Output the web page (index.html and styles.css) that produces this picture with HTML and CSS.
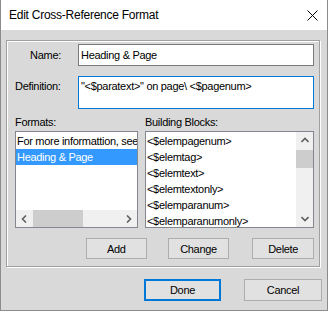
FILE: index.html
```html
<!DOCTYPE html>
<html lang="en">
<head>
    <meta charset="UTF-8">
    <title>Edit Cross-Reference Format</title>
    <link rel="stylesheet" href="styles.css">
</head>
<body>
    <div class="window">
        <div class="titlebar">
            <span class="title">Edit Cross-Reference Format</span>
            <svg class="close" width="11" height="11" viewBox="0 0 11 11">
                <path d="M0.5 0.5 L10.5 10.5 M10.5 0.5 L0.5 10.5" stroke="#000" stroke-width="1" fill="none"/>
            </svg>
        </div>

        <div class="group">
            <div class="field field-name">
                <label class="label">Name:</label>
                <div class="textbox">Heading &amp; Page</div>
            </div>

            <div class="field field-def">
                <label class="label">Definition:</label>
                <div class="textbox focused">"&lt;$paratext&gt;" on page\ &lt;$pagenum&gt;</div>
            </div>

            <div class="lists">
                <div class="list-col col-formats">
                    <div class="list-label">Formats:</div>
                    <div class="listbox">
                        <div class="items">
                            <div class="item">For more informattion, see</div>
                            <div class="item selected">Heading &amp; Page</div>
                        </div>
                        <div class="hscroll">
                            <span class="arrow"><svg width="7" height="8" viewBox="0 0 7 8"><path d="M5 0.5 L1.5 4 L5 7.5" stroke="#606060" stroke-width="1.6" fill="none"/></svg></span>
                            <span class="track"><span class="hthumb"></span></span>
                            <span class="arrow"><svg width="7" height="8" viewBox="0 0 7 8"><path d="M2 0.5 L5.5 4 L2 7.5" stroke="#606060" stroke-width="1.6" fill="none"/></svg></span>
                        </div>
                    </div>
                </div>

                <div class="list-col col-blocks">
                    <div class="list-label">Building Blocks:</div>
                    <div class="listbox listbox-v">
                        <div class="items">
                            <div class="item">&lt;$elempagenum&gt;</div>
                            <div class="item">&lt;$elemtag&gt;</div>
                            <div class="item">&lt;$elemtext&gt;</div>
                            <div class="item">&lt;$elemtextonly&gt;</div>
                            <div class="item">&lt;$elemparanum&gt;</div>
                            <div class="item">&lt;$elemparanumonly&gt;</div>
                        </div>
                        <div class="vscroll">
                            <span class="arrow"><svg width="8" height="7" viewBox="0 0 8 7"><path d="M0.5 5 L4 1.5 L7.5 5" stroke="#606060" stroke-width="1.6" fill="none"/></svg></span>
                            <span class="vtrack"><span class="vthumb"></span></span>
                            <span class="arrow"><svg width="8" height="7" viewBox="0 0 8 7"><path d="M0.5 2 L4 5.5 L7.5 2" stroke="#606060" stroke-width="1.6" fill="none"/></svg></span>
                        </div>
                    </div>
                </div>
            </div>

            <div class="edit-buttons">
                <button class="btn btn-add">Add</button>
                <button class="btn btn-change">Change</button>
                <button class="btn btn-delete">Delete</button>
            </div>
        </div>

        <div class="dialog-buttons">
            <button class="btn btn-done">Done</button>
            <button class="btn btn-cancel">Cancel</button>
        </div>
    </div>
</body>
</html>
```

FILE: styles.css
```css
* {
    margin: 0;
    padding: 0;
    box-sizing: border-box;
}

body {
    font-family: "Liberation Sans", Arial, sans-serif;
    font-size: 11px;
    line-height: 13px;
    letter-spacing: -0.3px;
    color: #000;
    background: #d9d9d9;
}

.window {
    width: 328px;
    height: 311px;
    background: #d9d9d9;
    border: 1px solid #8c8c8c;
    border-top: none;
    overflow: hidden;
}

.titlebar {
    height: 30px;
    background: #fff;
    display: flex;
    align-items: center;
    justify-content: space-between;
    padding: 0 9px 0 8px;
}

.title {
    font-size: 12px;
    letter-spacing: -0.25px;
}

.close {
    display: block;
}

/* group box */
.group {
    width: 314px;
    height: 227px;
    margin: 10px 0 0 5px;
    border: 1px solid #a0a0a0;
    box-shadow: inset 1px 1px 0 #fff, 1px 1px 0 #fff;
    padding: 3px 5px 0 8px;
}

.field {
    display: flex;
}

.field-name {
    align-items: center;
    height: 22px;
}

.field-def {
    margin-top: 10px;
    height: 33px;
}

.label {
    width: 63px;
    flex: none;
}

.field-name .label {
    text-align: right;
    padding-right: 17px;
}

.field-def .label {
    padding-top: 4px;
}

.textbox {
    flex: 1;
    height: 100%;
    background: #fff;
    border: 1px solid #7a7a7a;
    padding: 3px 2px;
    white-space: nowrap;
    overflow: hidden;
}

.field-name .textbox {
    padding-top: 4px;
}

.textbox.focused {
    border-color: #0078d7;
}

/* lists */
.lists {
    display: flex;
    gap: 7px;
    margin-top: 7px;
}

.col-formats {
    width: 123px;
}

.col-blocks {
    width: 169px;
}

.list-label {
    height: 13px;
    margin-bottom: 2px;
}

.listbox {
    height: 97px;
    background: #fff;
    border: 1px solid #828790;
    display: flex;
    flex-direction: column;
    overflow: hidden;
}

.listbox-v {
    flex-direction: row;
}

.items {
    flex: 1;
    padding-top: 1px;
    overflow: hidden;
}

.item {
    height: 16px;
    line-height: 16px;
    padding-left: 1px;
    white-space: nowrap;
    overflow: hidden;
}

.item.selected {
    background: #3399ff;
    color: #fff;
}

.hscroll {
    height: 17px;
    display: flex;
    background: #f0f0f0;
}

.hscroll .arrow {
    width: 17px;
    display: flex;
    align-items: center;
    justify-content: center;
}

.track {
    flex: 1;
    display: flex;
    align-items: stretch;
}

.hthumb {
    width: 50px;
    margin-left: 0;
    background: #cdcdcd;
}

.vscroll {
    width: 17px;
    display: flex;
    flex-direction: column;
    background: #f0f0f0;
}

.vscroll .arrow {
    height: 17px;
    display: flex;
    align-items: center;
    justify-content: center;
}

.vtrack {
    flex: 1;
    display: flex;
    flex-direction: column;
}

.vthumb {
    height: 18px;
    margin-top: 1px;
    background: #cdcdcd;
}

/* buttons */
.btn {
    font-family: "Liberation Sans", Arial, sans-serif;
    font-size: 11px;
    letter-spacing: -0.3px;
    color: #000;
    background: #e1e1e1;
    border: 1px solid #adadad;
    height: 21px;
}

.edit-buttons {
    display: flex;
    margin-top: 10px;
}

.btn-add {
    width: 61px;
    margin-left: 71px;
}

.btn-change {
    width: 62px;
    margin-left: 21px;
}

.btn-delete {
    width: 62px;
    margin-left: 23px;
}

.dialog-buttons {
    display: flex;
    justify-content: flex-end;
    gap: 23px;
    margin: 12px 5px 0 0;
}

.btn-done {
    width: 77px;
    height: 22px;
    border: 2px solid #0078d7;
}

.btn-cancel {
    width: 78px;
    height: 22px;
}
```
